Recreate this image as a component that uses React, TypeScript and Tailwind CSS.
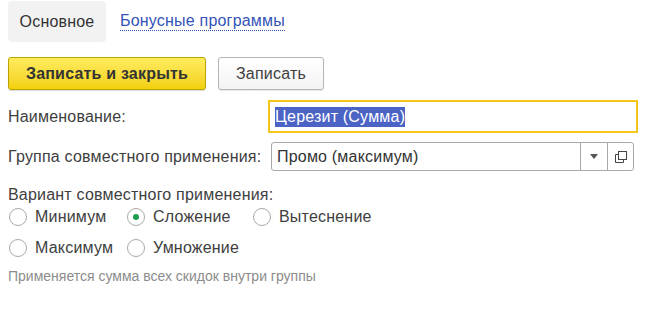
import React from 'react';

const font = { fontFamily: '"Liberation Sans", Arial, sans-serif' };

function Radio({ label, checked }: { label: string; checked?: boolean }) {
  return (
    <label className="flex items-center gap-[8px] h-[22px]">
      <span className="w-[18px] h-[18px] rounded-full border border-[#a9a9a9] bg-white flex items-center justify-center">
        {checked && <span className="w-[6px] h-[6px] rounded-full bg-[#1e9b4f]" />}
      </span>
      <span>{label}</span>
    </label>
  );
}

export default function App() {
  return (
    <div className="w-[646px] h-[320px] bg-white text-[16px] tracking-[0.2px] text-[#404040]" style={font}>
      {/* Вкладки */}
      <div className="flex items-center pl-2 pt-px">
        <div className="h-[41px] w-[98px] bg-[#f2f2f2] rounded-[4px] flex items-center justify-center text-[#333]">
          Основное
        </div>
        <a className="ml-[14px] text-[#3353b8] border-b border-dotted border-[#3353b8] leading-[18px]">
          Бонусные программы
        </a>
      </div>

      {/* Кнопки */}
      <div className="flex gap-3 pl-2 mt-[15px]">
        <button className="h-[33px] w-[198px] rounded-[3px] border border-[#b9a300] bg-gradient-to-b from-[#ffec5c] to-[#f2d000] font-bold text-[#333] shadow-[0_1px_1px_rgba(0,0,0,0.15)]">
          Записать и закрыть
        </button>
        <button className="h-[33px] w-[106px] rounded-[3px] border border-[#b5b5b5] bg-gradient-to-b from-white to-[#f3f3f3] text-[#404040] shadow-[0_1px_1px_rgba(0,0,0,0.1)]">
          Записать
        </button>
      </div>

      {/* Наименование */}
      <div className="flex items-center pl-2 mt-[10px]">
        <span className="w-[260px]">Наименование:</span>
        <div className="h-[33px] w-[370px] border-2 border-[#f5c518] flex items-center pl-[5px]">
          <span className="bg-[#4b63c4] text-white leading-[20px]">Церезит (Сумма)</span>
        </div>
      </div>

      {/* Группа */}
      <div className="flex items-center pl-2 mt-[9px]">
        <span className="w-[263px]">Группа совместного применения:</span>
        <div className="h-[29px] w-[363px] border border-[#a9a9a9] rounded-[3px] flex items-stretch text-[#333]">
          <div className="flex-1 flex items-center pl-[5px]">Промо (максимум)</div>
          <div className="w-[27px] border-l border-[#a9a9a9] flex items-center justify-center">
            <svg width="8" height="5" viewBox="0 0 8 5">
              <path d="M0 0h8L4 5z" fill="#555" />
            </svg>
          </div>
          <div className="w-[26px] border-l border-[#a9a9a9] flex items-center justify-center">
            <svg width="12" height="12" viewBox="0 0 12 12" fill="none" stroke="#444" strokeWidth="1">
              <rect x="3.5" y="0.5" width="8" height="8" />
              <path d="M3.5 3.5H0.5v8h8V8.5" />
            </svg>
          </div>
        </div>
      </div>

      {/* Вариант */}
      <div className="pl-2 mt-[14px]">
        <div className="h-[20px] leading-[20px]">Вариант совместного применения:</div>
        <div className="grid grid-cols-[118px_126px_auto] gap-y-[9px] mt-px pl-px">
          <Radio label="Минимум" />
          <Radio label="Сложение" checked />
          <Radio label="Вытеснение" />
          <Radio label="Максимум" />
          <Radio label="Умножение" />
        </div>
        <div className="mt-[9px] h-[16px] leading-[16px] text-[14px] tracking-normal text-[#8c8c8c]">
          Применяется сумма всех скидок внутри группы
        </div>
      </div>
    </div>
  );
}
